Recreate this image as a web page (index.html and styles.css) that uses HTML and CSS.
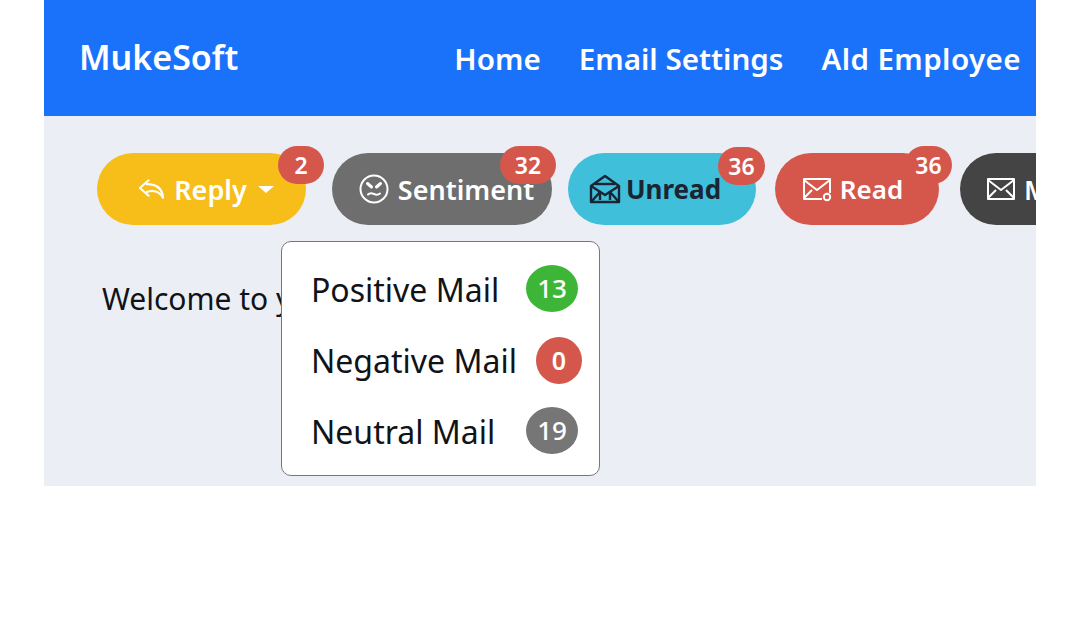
FILE: index.html
```html
<!DOCTYPE html>
<html lang="en">
<head>
    <meta charset="UTF-8">
    <meta name="viewport" content="width=device-width, initial-scale=1.0">
    <title>MukeSoft</title>
    <link rel="stylesheet" href="styles.css">
</head>
<body>
    <div class="frame">
        <nav class="navbar">
            <a class="brand">MukeSoft</a>
            <div class="nav-links">
                <a>Home</a>
                <a>Email Settings</a>
                <a class="nav-wide">Ald Employee</a>
            </div>
        </nav>
        <main class="content">
            <div class="toolbar">
                <button class="pill pill-reply">
                    <svg class="icon icon-reply" viewBox="0 0 28 24" fill="none" stroke="currentColor" stroke-width="2.200" stroke-linecap="round" stroke-linejoin="round">
                        <path d="M11 3 2 11l9 8"/>
                        <path d="M9 7c9 0 16 3 17 14"/>
                        <path d="M9 15c6-2 13-1 17 6"/>
                    </svg>
                    <span>Reply</span>
                    <i class="caret"></i>
                    <span class="count count-reply">2</span>
                </button>
                <button class="pill pill-sentiment">
                    <svg class="icon" viewBox="0 0 30 30" fill="none" stroke="currentColor" stroke-width="2" stroke-linecap="round">
                        <circle cx="15" cy="15" r="13.500"/>
                        <path d="M8.500 9.500l4 3.500M21.500 9.500l-4 3.500" stroke-width="3"/>
                        <path d="M9 20.500c2-2 4-1.500 6-.5s4 1 6-.5"/>
                    </svg>
                    <span>Sentiment</span>
                    <span class="count count-sentiment">32</span>
                </button>
                <button class="pill pill-unread">
                    <svg class="icon icon-unread" viewBox="0 0 32 30" fill="none" stroke="currentColor" stroke-width="2.400" stroke-linejoin="round">
                        <path d="M2 12 16 2l14 10v16H2z"/>
                        <path d="M6 10h20"/>
                        <path d="M2 12l14 9 14-9"/>
                        <path d="M2 28l9-10v8M30 28l-9-10v8"/>
                    </svg>
                    <span>Unread</span>
                    <span class="count count-unread">36</span>
                </button>
                <button class="pill pill-read">
                    <svg class="icon" viewBox="0 0 30 24" fill="none" stroke="currentColor" stroke-width="2" stroke-linejoin="round">
                        <path d="M20 22H2V2h26v14"/>
                        <path d="M2 3l13 10L28 3"/>
                        <path d="M2 21l8-8"/>
                        <circle cx="25" cy="20" r="3.200"/>
                    </svg>
                    <span>Read</span>
                    <span class="count count-read">36</span>
                </button>
                <button class="pill pill-more">
                    <svg class="icon" viewBox="0 0 30 24" fill="none" stroke="currentColor" stroke-width="2" stroke-linejoin="round">
                        <rect x="2" y="2" width="26" height="20"/>
                        <path d="M2 3l13 10L28 3M2 21l8-8M28 21l-8-8"/>
                    </svg>
                    <span>Mail</span>
                </button>
            </div>
            <p class="welcome">Welcome to your dashboard</p>
            <ul class="dropdown">
                <li>Positive Mail<span class="dot dot-green">13</span></li>
                <li>Negative Mail<span class="dot dot-red">0</span></li>
                <li>Neutral Mail<span class="dot dot-gray">19</span></li>
            </ul>
        </main>
    </div>
</body>
</html>
```

FILE: styles.css
```css
body {
    margin: 0;
    background-color: #fff;
    font-family: "Noto Sans", "Open Sans", sans-serif;
}
.frame {
    margin-left: 44px;
    width: 992px;
    height: 486px;
    overflow: hidden;
    background-color: #ebeff5;
}
.navbar {
    height: 116px;
    padding: 0 15px 0 35px;
    display: flex;
    align-items: center;
    justify-content: space-between;
    background-color: #1b72fa;
    color: #fff;
    font-weight: 600;
}
.brand {
    font-size: 34px;
    padding-bottom: 2px;
}
.nav-links {
    display: flex;
    gap: 38px;
    font-size: 29.600px;
    padding-top: 1px;
}
.nav-wide {
    letter-spacing: .4px;
}
.content {
    position: relative;
    height: 370px;
    padding: 37px 0 0 53px;
    box-sizing: border-box;
}
.toolbar {
    display: flex;
    white-space: nowrap;
}
.pill {
    position: relative;
    flex: none;
    box-sizing: border-box;
    height: 72px;
    padding: 0;
    border: none;
    border-radius: 36px;
    display: flex;
    align-items: center;
    justify-content: center;
    gap: 9px;
    font-family: inherit;
    font-size: 27px;
    font-weight: 600;
    color: #fff;
}
.icon {
    flex: none;
    width: 30px;
    height: 30px;
}
.icon-reply {
    width: 27px;
}
.icon-unread {
    width: 32px;
}
.pill-reply {
    width: 209px;
    margin-right: 26px;
    padding-left: 9px;
    background-color: #f7bd19;
}
.pill-sentiment {
    width: 220px;
    margin-right: 16px;
    padding-left: 9px;
    background-color: #6e6e6e;
}
.pill-unread {
    width: 188px;
    margin-right: 19px;
    padding-right: 14px;
    gap: 5px;
    background-color: #3fbfd9;
    color: #1b2433;
    font-size: 26px;
    font-weight: 700;
}
.pill-read {
    width: 164px;
    margin-right: 21px;
    padding-right: 9px;
    gap: 8px;
    font-size: 26px;
    background-color: #d5574c;
}
.pill-more {
    width: 170px;
    justify-content: flex-start;
    padding-left: 26px;
    gap: 8px;
    background-color: #444;
}
.caret {
    width: 0;
    height: 0;
    border-left: 8px solid transparent;
    border-right: 8px solid transparent;
    border-top: 7px solid #fff;
    margin-left: 2px;
}
.count {
    position: absolute;
    height: 38px;
    border-radius: 19px;
    display: flex;
    align-items: center;
    justify-content: center;
    background-color: #d5574c;
    color: #fff;
    font-size: 23px;
    font-weight: 600;
}
.count-reply {
    top: -7px;
    left: 181px;
    width: 46px;
}
.count-sentiment {
    top: -7px;
    left: 168px;
    width: 56px;
}
.count-unread {
    top: -6px;
    left: 150px;
    width: 47px;
}
.count-read {
    top: -7px;
    left: 130px;
    width: 47px;
}
.welcome {
    margin: 53px 0 0 5px;
    font-size: 30px;
    color: #101317;
    white-space: nowrap;
}
.dropdown {
    position: absolute;
    top: 125px;
    left: 237px;
    width: 319px;
    height: 235px;
    box-sizing: border-box;
    margin: 0;
    padding: 12px 0 0 29px;
    list-style: none;
    background-color: #fff;
    border: 1px solid #777;
    border-radius: 10px;
    font-size: 32px;
    color: #101317;
}
.dropdown li {
    position: relative;
    height: 71px;
    line-height: 71px;
}
.dot {
    position: absolute;
    top: 11px;
    height: 47px;
    border-radius: 50%;
    display: flex;
    align-items: center;
    justify-content: center;
    color: #fff;
    font-size: 26px;
    font-weight: 500;
}
.dot-green {
    left: 215px;
    width: 52px;
    background-color: #3db536;
}
.dot-red {
    top: 12px;
    left: 225px;
    width: 46px;
    background-color: #d5574c;
    font-size: 25px;
    font-weight: 600;
}
.dot-gray {
    left: 215px;
    width: 52px;
    background-color: #767676;
}
```
